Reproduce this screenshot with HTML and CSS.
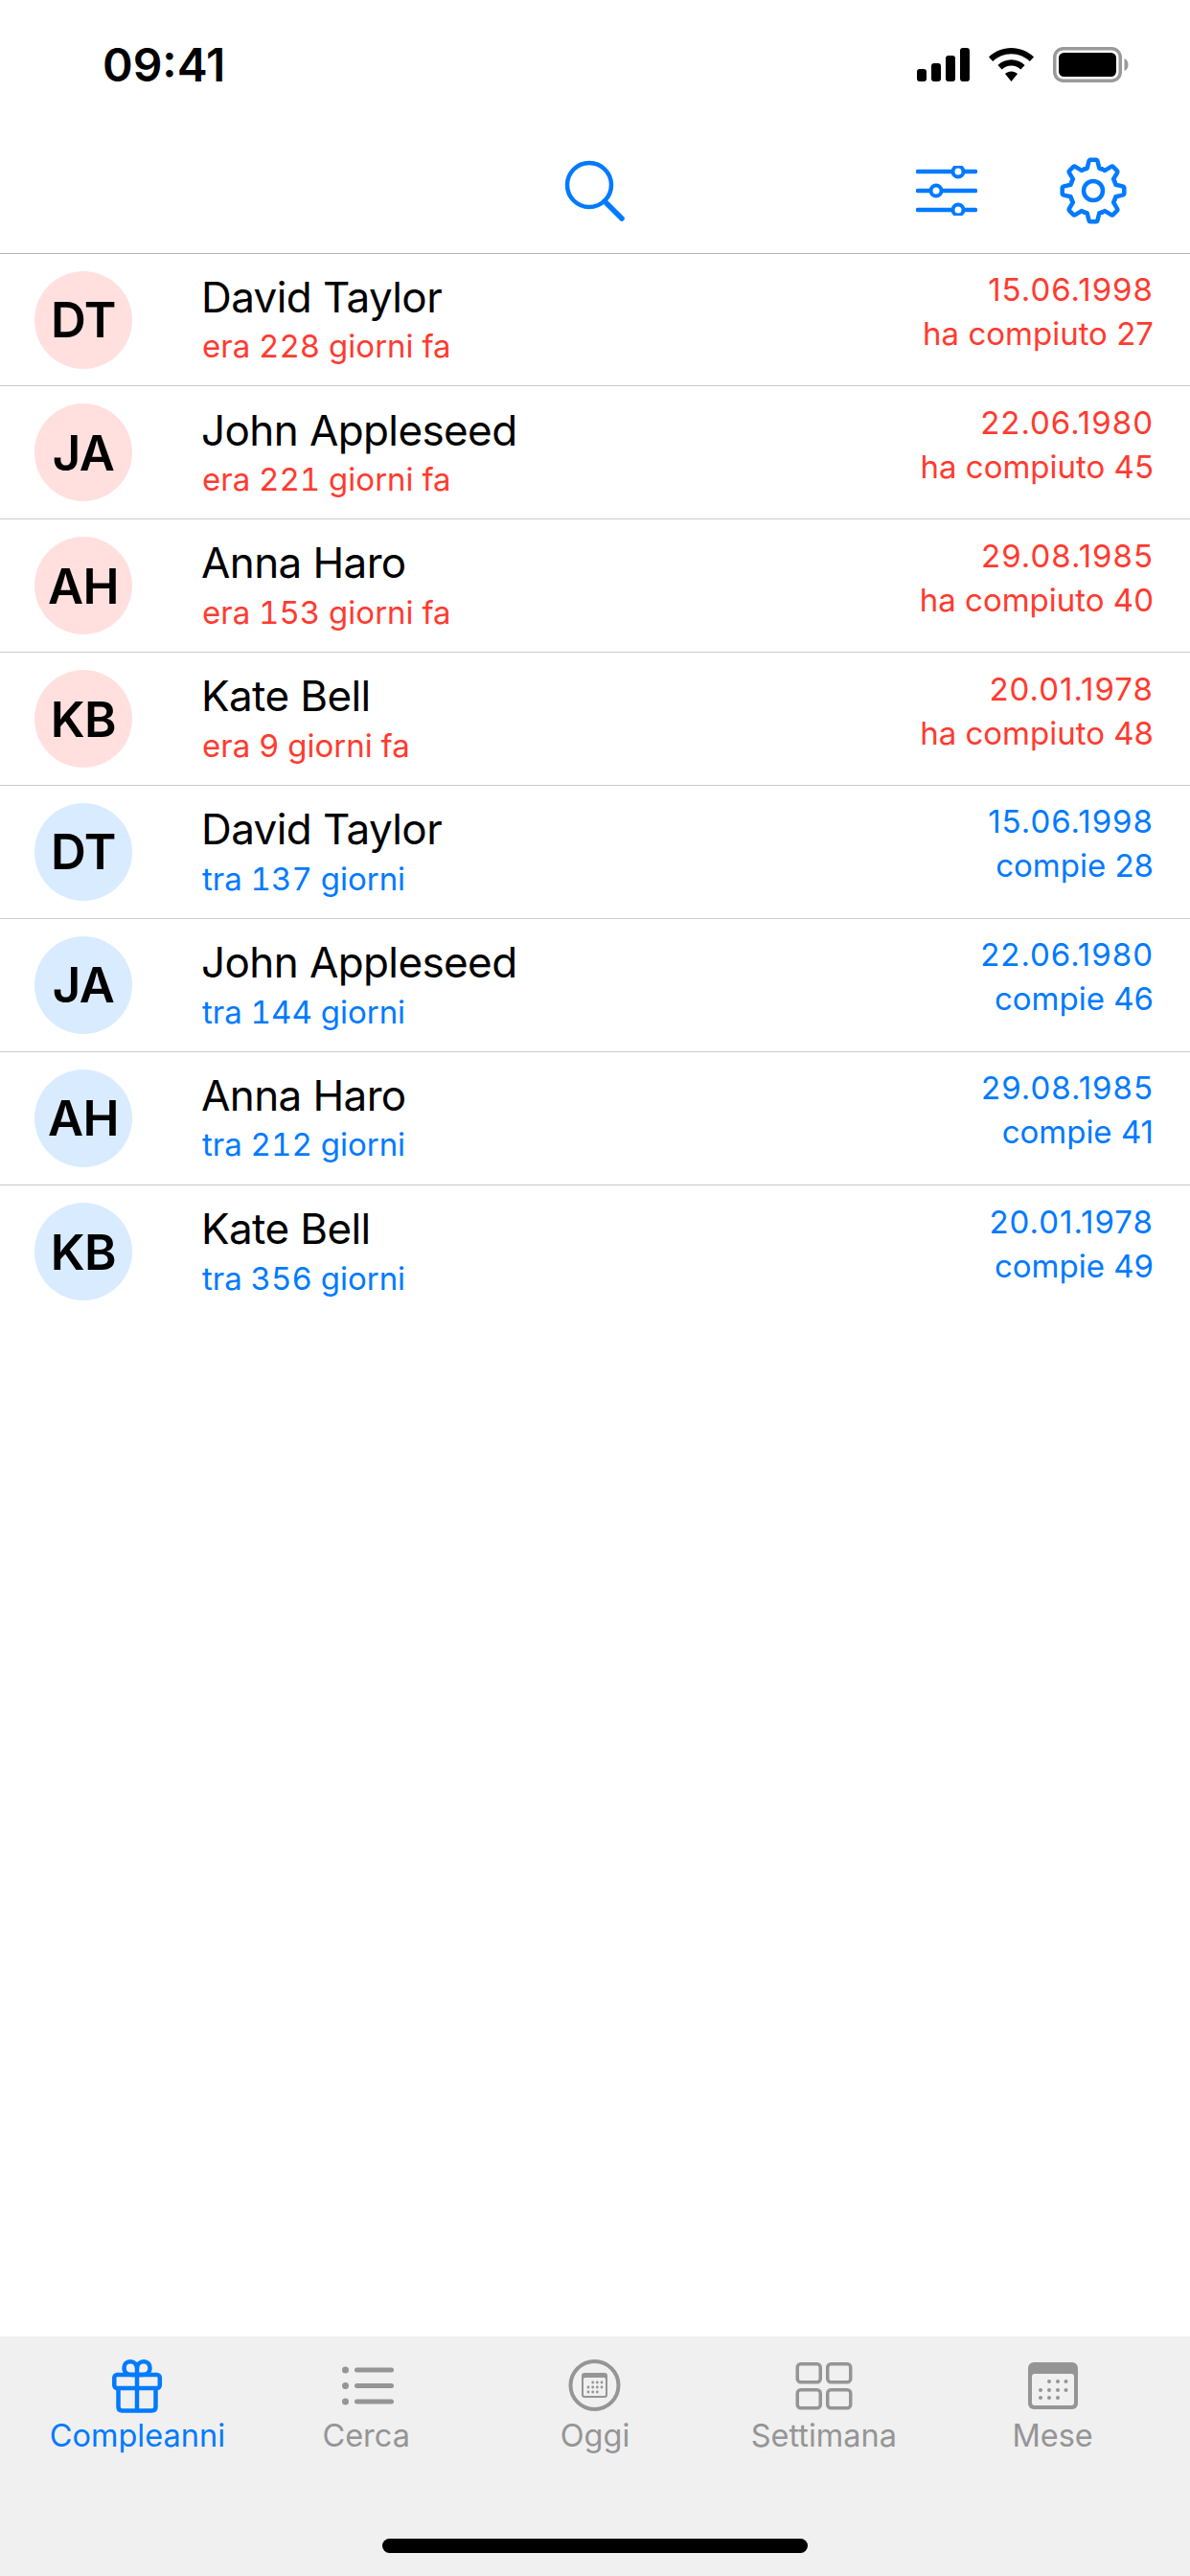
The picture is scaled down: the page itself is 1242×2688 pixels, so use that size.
FILE: index.html
```html
<!DOCTYPE html>
<html lang="it">
<head>
<meta charset="utf-8">
<title>Compleanni</title>
<link rel="stylesheet" href="styles.css">
</head>
<body>
<div class="app">
  <header class="status">
    <span class="time">09:41</span>
    <div class="status-icons">
      <svg class="ic-signal" width="55" height="35" viewBox="0 0 55 35"><rect x="0" y="22" width="10" height="13" rx="3"/><rect x="15" y="16" width="10" height="19" rx="3"/><rect x="30" y="8" width="10" height="27" rx="3"/><rect x="45" y="0" width="10" height="35" rx="3"/></svg>
      <svg class="ic-wifi" width="47" height="35" viewBox="0 0 47 35"><path d="M23.5 0C32.5 0 40.6 3.5 47 9.5L42.8 14C37.6 9.2 31 6.3 23.5 6.3S9.4 9.2 4.2 14L0 9.5C6.4 3.5 14.5 0 23.5 0Z"/><path d="M23.5 12.3C28.8 12.3 33.7 14.4 37.6 17.9L33.3 22.4C30.6 20 27.2 18.6 23.5 18.6S16.4 20 13.7 22.4L9.4 17.9C13.3 14.4 18.2 12.3 23.5 12.3Z"/><path d="M23.5 24.6C25.9 24.6 28.2 25.5 30 27.1L23.5 35L17 27.1C18.8 25.5 21.1 24.6 23.5 24.6Z"/></svg>
      <svg class="ic-batt" width="79" height="37" viewBox="0 0 79 37"><rect x="1.75" y="1.75" width="68.5" height="33.5" rx="9" fill="none" stroke="#999" stroke-width="3.5"/><rect x="6" y="6" width="60" height="25" rx="5.5" fill="#000"/><path d="M74.500 12C77 13 78.500 15.500 78.500 18.500S77 24 74.500 25Z" fill="#999"/></svg>
    </div>
  </header>

  <nav class="toolbar">
    <svg class="ic-search" width="66" height="66" viewBox="0 0 66 66"><circle cx="27" cy="27" r="23" fill="none" stroke="#007aff" stroke-width="4.500"/><path d="M43 44L61 62" fill="none" stroke="#007aff" stroke-width="5.500" stroke-linecap="round"/></svg>
    <svg class="ic-sliders" width="64" height="52" viewBox="0 0 64 52"><g fill="none" stroke="#007aff" stroke-width="4.500" stroke-linecap="round"><path d="M2 6H62M2 26H62M2 46H62"/></g><g fill="#fff" stroke="#007aff" stroke-width="4"><circle cx="44" cy="6" r="5.500"/><circle cx="21" cy="26" r="5.500"/><circle cx="44" cy="46" r="5.500"/></g></svg>
    <svg class="ic-gear" width="70" height="70" viewBox="-35 -35 70 70"><defs><path id="tooth" d="M-9.300 -22.500L-6.300 -23.500L-4.600 -30.500Q-4.200 -32.300 -2.800 -32.300H2.800Q4.200 -32.300 4.600 -30.500L6.300 -23.500L9.300 -22.500"/></defs><g fill="none" stroke="#007aff" stroke-width="4.500" stroke-linejoin="round" stroke-linecap="round"><use href="#tooth"/><use href="#tooth" transform="rotate(45)"/><use href="#tooth" transform="rotate(90)"/><use href="#tooth" transform="rotate(135)"/><use href="#tooth" transform="rotate(180)"/><use href="#tooth" transform="rotate(225)"/><use href="#tooth" transform="rotate(270)"/><use href="#tooth" transform="rotate(315)"/><circle r="10"/></g></svg>
  </nav>

  <main class="list">
    <div class="row past"><div class="avatar">DT</div><div class="who"><div class="name">David Taylor</div><div class="sub">era 228 giorni fa</div></div><div class="when"><div class="date">15.06.1998</div><div>ha compiuto 27</div></div></div>
    <div class="row past"><div class="avatar">JA</div><div class="who"><div class="name">John Appleseed</div><div class="sub">era 221 giorni fa</div></div><div class="when"><div class="date">22.06.1980</div><div>ha compiuto 45</div></div></div>
    <div class="row past"><div class="avatar">AH</div><div class="who"><div class="name">Anna Haro</div><div class="sub">era 153 giorni fa</div></div><div class="when"><div class="date">29.08.1985</div><div>ha compiuto 40</div></div></div>
    <div class="row past"><div class="avatar">KB</div><div class="who"><div class="name">Kate Bell</div><div class="sub">era 9 giorni fa</div></div><div class="when"><div class="date">20.01.1978</div><div>ha compiuto 48</div></div></div>
    <div class="row next"><div class="avatar">DT</div><div class="who"><div class="name">David Taylor</div><div class="sub">tra 137 giorni</div></div><div class="when"><div class="date">15.06.1998</div><div>compie 28</div></div></div>
    <div class="row next"><div class="avatar">JA</div><div class="who"><div class="name">John Appleseed</div><div class="sub">tra 144 giorni</div></div><div class="when"><div class="date">22.06.1980</div><div>compie 46</div></div></div>
    <div class="row next"><div class="avatar">AH</div><div class="who"><div class="name">Anna Haro</div><div class="sub">tra 212 giorni</div></div><div class="when"><div class="date">29.08.1985</div><div>compie 41</div></div></div>
    <div class="row next last"><div class="avatar">KB</div><div class="who"><div class="name">Kate Bell</div><div class="sub">tra 356 giorni</div></div><div class="when"><div class="date">20.01.1978</div><div>compie 49</div></div></div>
  </main>

  <footer class="tabbar">
    <div class="tabs">
      <div class="tab active">
        <svg width="60" height="56" viewBox="0 0 60 56"><g fill="none" stroke="#007aff" stroke-width="4.500" stroke-linejoin="round"><rect x="6.300" y="16" width="47.500" height="14" rx="3"/><path d="M10.500 30V49.500Q10.500 53.500 14.500 53.500H45.500Q49.500 53.500 49.500 49.500V30"/><path d="M30 16V53.500"/><path d="M30 16V10C30 5 27 2.300 23 2.300C19 2.300 16.500 5 16.500 9C16.500 13.500 20 16 24 16H36C40 16 43.500 13.500 43.500 9C43.500 5 41 2.300 37 2.300C33 2.300 30 5 30 10"/></g></svg>
        <span>Compleanni</span>
      </div>
      <div class="tab">
        <svg width="60" height="56" viewBox="0 0 60 56"><g fill="#959595"><circle cx="8.500" cy="11" r="3.500"/><circle cx="8.500" cy="27.500" r="3.500"/><circle cx="8.500" cy="44" r="3.500"/><rect x="18" y="8.500" width="41" height="5" rx="2.500"/><rect x="18" y="25" width="41" height="5" rx="2.500"/><rect x="18" y="41.500" width="41" height="5" rx="2.500"/></g></svg>
        <span>Cerca</span>
      </div>
      <div class="tab">
        <svg width="60" height="56" viewBox="0 0 60 56"><circle cx="29.500" cy="27" r="25" fill="none" stroke="#959595" stroke-width="4"/><rect x="16" y="14" width="27" height="26" rx="3" fill="#959595"/><rect x="18" y="19" width="23" height="19" rx="1.500" fill="#f0f0f0"/><g fill="#959595"><circle cx="27.700" cy="24" r="1.400"/><circle cx="32.300" cy="24" r="1.400"/><circle cx="37" cy="24" r="1.400"/><circle cx="23" cy="29" r="1.400"/><circle cx="27.700" cy="29" r="1.400"/><circle cx="32.300" cy="29" r="1.400"/><circle cx="37" cy="29" r="1.400"/><circle cx="23" cy="34" r="1.400"/><circle cx="27.700" cy="34" r="1.400"/><circle cx="32.300" cy="34" r="1.400"/></g></svg>
        <span>Oggi</span>
      </div>
      <div class="tab">
        <svg width="60" height="56" viewBox="0 0 60 56"><g fill="none" stroke="#959595" stroke-width="3.500"><rect x="2.250" y="4.750" width="24" height="19" rx="3.500"/><rect x="33.750" y="4.750" width="24" height="19" rx="3.500"/><rect x="2.250" y="31.750" width="24" height="19" rx="3.500"/><rect x="33.750" y="31.750" width="24" height="19" rx="3.500"/></g></svg>
        <span>Settimana</span>
      </div>
      <div class="tab">
        <svg width="60" height="56" viewBox="0 0 60 56"><rect x="4" y="3" width="52" height="49" rx="6" fill="#959595"/><rect x="8" y="15" width="44" height="33" rx="3" fill="#f0f0f0"/><g fill="#959595"><circle cx="26" cy="23" r="2"/><circle cx="35" cy="23" r="2"/><circle cx="43.500" cy="23" r="2"/><circle cx="17" cy="32" r="2"/><circle cx="26" cy="32" r="2"/><circle cx="35" cy="32" r="2"/><circle cx="43.500" cy="32" r="2"/><circle cx="17" cy="40" r="2"/><circle cx="26" cy="40" r="2"/><circle cx="35" cy="40" r="2"/></g></svg>
        <span>Mese</span>
      </div>
    </div>
    <div class="home"></div>
  </footer>
</div>
</body>
</html>
```
FILE: styles.css
```css
* { box-sizing: border-box; }
html, body { margin: 0; padding: 0; background: #fff; }
body { font-family: Inter, "Liberation Sans", sans-serif; color: #000; }
svg { display: block; flex: none; }

.app { width: 1242px; height: 2688px; display: flex; flex-direction: column; }

.status { height: 132px; flex: none; padding: 50px 64px 0 107px; display: flex; justify-content: space-between; align-items: flex-start; }
.time { font-size: 48px; font-weight: 600; line-height: 35px; }
.status-icons { display: flex; align-items: flex-start; gap: 20px; }
.ic-batt { margin-top: -1px; }

.toolbar { height: 132.6px; flex: none; border-bottom: 1px solid #b2b2b2; display: flex; align-items: flex-start; padding: 32px 67px 0 588px; }
.ic-search { margin-top: 2px; }
.ic-sliders { margin: 9px 0 0 302px; }
.ic-gear { margin-left: 86px; }

.list { flex: 1; display: flex; flex-direction: column; }
.row { height: 138.86px; flex: none; border-bottom: 1px solid #c9c9c9; display: flex; align-items: center; padding: 0 38px 0 36px; }
.row.last { border-bottom: 0; }
.avatar { width: 102px; height: 102px; border-radius: 50%; display: flex; align-items: center; justify-content: center; font-size: 51px; font-weight: 600; letter-spacing: -0.5px; flex: none; }
.past .avatar { background: #ffe0de; }
.next .avatar { background: #d9ebff; }
.who { margin-left: 73px; flex: 1; }
.name { font-size: 44px; line-height: 52px; letter-spacing: -0.6px; margin-left: -1px; }
.sub { font-size: 33px; line-height: 44px; margin-top: 3.5px; font-variant-numeric: tabular-nums; }
.when { text-align: right; font-size: 33px; line-height: 46px; margin-bottom: 17px; }
.date { letter-spacing: 1px; }
.past .sub, .past .when { color: #ff3b30; }
.next .sub, .next .when { color: #007aff; }

.tabbar { height: 250px; flex: none; background: #f0f0f0; display: flex; flex-direction: column; align-items: center; position: relative; }
.tabs { width: 100%; padding: 24px 24px 0; display: grid; grid-template-columns: repeat(5, 1fr); }
.tab { display: flex; flex-direction: column; align-items: center; color: #959595; font-size: 32.5px; line-height: 40px; }
.tab.active { color: #007aff; }
.tab span { margin-top: 4px; }
.home { position: absolute; left: 399px; top: 211px; width: 444px; height: 15px; border-radius: 8px; background: #000; }
```
